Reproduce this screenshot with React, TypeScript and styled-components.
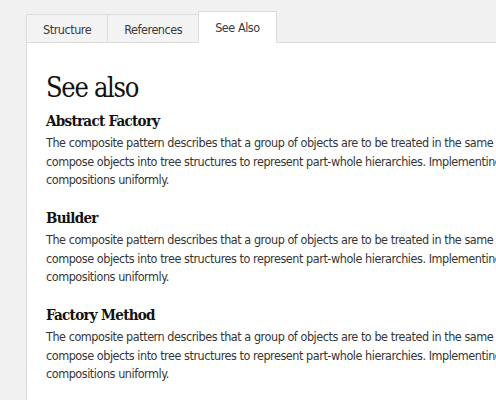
import styled, { createGlobalStyle } from 'styled-components'

const GlobalStyle = createGlobalStyle`
  html, body {
    margin: 0;
    padding: 0;
    background: #f1f1f1;
    overflow: hidden;
  }
`

const Page = styled.div`
  width: 496px;
  height: 400px;
  overflow: hidden;
  padding: 11px 0 0 26px;
  box-sizing: border-box;
`

const TabBar = styled.div`
  display: flex;
  align-items: flex-end;
  width: 900px;
`

const Tab = styled.div<{ $active?: boolean }>`
  height: ${p => (p.$active ? 32 : 29)}px;
  line-height: ${p => (p.$active ? 32 : 29)}px;
  padding: 0 16px;
  margin-right: -1px;
  box-sizing: border-box;
  border: 1px solid #dcdcdc;
  border-bottom: ${p => (p.$active ? 'none' : '1px solid #dcdcdc')};
  background: ${p => (p.$active ? '#ffffff' : '#f3f3f3')};
  color: #3a3a3a;
  font-family: 'DejaVu Sans', sans-serif;
  font-stretch: condensed;
  font-size: 12.5px;
  letter-spacing: -0.45px;
  position: relative;
  z-index: ${p => (p.$active ? 1 : 0)};
`

const Panel = styled.div`
  width: 900px;
  margin-top: -1px;
  border-top: 1px solid #dcdcdc;
  border-left: 1px solid #dcdcdc;
  background: #ffffff;
  padding: 28px 0 40px 19px;
  height: 400px;
`

const Title = styled.h1`
  margin: 0 0 6px;
  font-family: 'DejaVu Serif', serif;
  font-stretch: condensed;
  font-weight: 400;
  font-size: 27px;
  letter-spacing: -1.3px;
  line-height: 34px;
  color: #111;
`

const Entry = styled.section`
  margin-bottom: 18.5px;
`

const EntryTitle = styled.h2`
  margin: 0 0 3px;
  font-family: 'DejaVu Serif', serif;
  font-stretch: condensed;
  font-weight: 700;
  font-size: 15px;
  letter-spacing: -0.7px;
  line-height: 20px;
  color: #111;
`

const EntryText = styled.p`
  margin: 0;
  width: 828px;
  font-family: 'DejaVu Sans', sans-serif;
  font-stretch: condensed;
  font-size: 12.5px;
  letter-spacing: -0.45px;
  line-height: 18.5px;
  color: #363636;
`

const text =
  'The composite pattern describes that a group of objects are to be treated in the same way as a single instance of an object. The intent of a composite is to compose objects into tree structures to represent part-whole hierarchies. Implementing the composite pattern lets clients treat individual objects and compositions uniformly.'

const entries = ['Abstract Factory', 'Builder', 'Factory Method']

function App () {
  return (
    <Page>
      <GlobalStyle />
      <TabBar>
        <Tab>Structure</Tab>
        <Tab>References</Tab>
        <Tab $active>See Also</Tab>
      </TabBar>
      <Panel>
        <Title>See also</Title>
        {entries.map(name => (
          <Entry key={name}>
            <EntryTitle>{name}</EntryTitle>
            <EntryText>{text}</EntryText>
          </Entry>
        ))}
      </Panel>
    </Page>
  )
}

export default App
